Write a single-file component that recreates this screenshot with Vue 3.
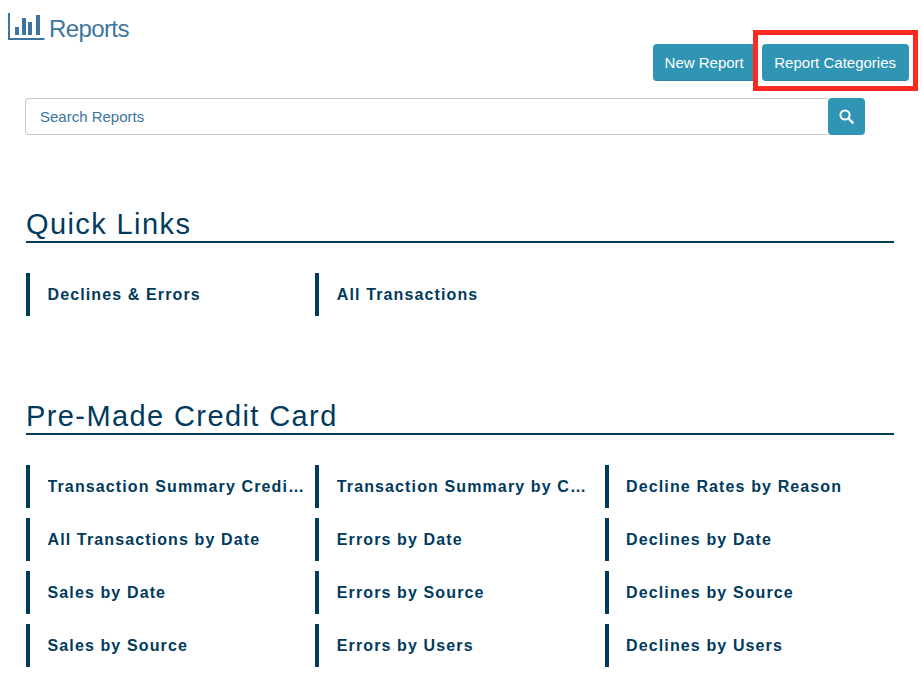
<script setup>
const quick = ['Declines & Errors', 'All Transactions']
const premade = [
  'Transaction Summary Credit Card', 'Transaction Summary by Card', 'Decline Rates by Reason',
  'All Transactions by Date', 'Errors by Date', 'Declines by Date',
  'Sales by Date', 'Errors by Source', 'Declines by Source',
  'Sales by Source', 'Errors by Users', 'Declines by Users'
]
</script>

<template>
  <div class="page">
    <header class="title">
      <svg class="logo" width="37" height="27" viewBox="0 0 37 27">
        <path d="M1 0V26H36.5" fill="none" stroke="#3b75a0" stroke-width="2"/>
        <rect x="7" y="14" width="4" height="8" fill="#3b75a0"/>
        <rect x="14" y="5" width="4" height="17" fill="#3b75a0"/>
        <rect x="20" y="9" width="4" height="13" fill="#3b75a0"/>
        <rect x="28" y="2" width="4" height="20" fill="#3b75a0"/>
      </svg>
      <span>Reports</span>
    </header>

    <div class="actions">
      <button class="btn btn-new">New Report</button>
      <span class="highlight"><button class="btn">Report Categories</button></span>
    </div>

    <div class="search">
      <div class="input">Search Reports</div>
      <button class="search-btn" aria-label="Search">
        <svg width="15" height="15" viewBox="0 0 15 15">
          <circle cx="6" cy="6" r="4.6" fill="none" stroke="#fff" stroke-width="2"/>
          <path d="M9.5 9.5L13.6 13.6" stroke="#fff" stroke-width="2.4" stroke-linecap="round"/>
        </svg>
      </button>
    </div>

    <section class="section first">
      <h2>Quick Links</h2>
      <div class="grid">
        <a v-for="q in quick" :key="q" class="link"><span>{{ q }}</span></a>
      </div>
    </section>

    <section class="section second">
      <h2>Pre-Made Credit Card</h2>
      <div class="grid">
        <a v-for="p in premade" :key="p" class="link"><span>{{ p }}</span></a>
      </div>
    </section>
  </div>
</template>

<style>
html, body { margin: 0; background: #fff; }
</style>

<style scoped>
.page {
  width: 922px;
  height: 674px;
  overflow: hidden;
  box-sizing: border-box;
  font-family: "Liberation Sans", Arial, sans-serif;
  position: relative;
}
.title {
  display: flex;
  align-items: flex-start;
  gap: 4px;
  padding: 13px 0 0 8px;
  height: 31px;
  color: #3b75a0;
  font-size: 24px;
  letter-spacing: -0.6px;
  line-height: 32px;
}
.logo { display: block; }
.actions {
  display: flex;
  justify-content: flex-end;
  padding-right: 13px;
  gap: 5px;
}
.btn {
  height: 37px;
  padding: 0 13px 0 12.5px;
  border: 0;
  border-bottom: 1px solid #2b86a6;
  border-radius: 4px;
  background: #3095b4;
  color: #fff;
  font: 15px "Liberation Sans", Arial, sans-serif;
  display: block;
}
.btn-new { padding-left: 12px; }
.highlight { position: relative; display: block; }
.highlight::after {
  content: "";
  position: absolute;
  left: -9px;
  right: -9px;
  top: -14px;
  bottom: -10px;
  border: 5px solid #ff2a1f;
  pointer-events: none;
}
.search {
  display: flex;
  margin: 17px 57px 0 25px;
  height: 37px;
}
.input {
  flex: 1;
  box-sizing: border-box;
  border: 1px solid #c9c9c9;
  border-right: 0;
  border-radius: 4px 0 0 4px;
  padding-left: 14px;
  line-height: 36px;
  color: #3b75a0;
  font-size: 15px;
}
.search-btn {
  width: 37px;
  height: 37px;
  border: 0;
  border-radius: 4px;
  background: #3095b4;
  display: flex;
  align-items: center;
  justify-content: center;
  padding: 0 1px 1px 0;
}
.section { margin: 0 28px 0 26px; }
.first { margin-top: 71px; }
.second { margin-top: 82px; }
h2 {
  margin: 0;
  height: 35px;
  border-bottom: 2px solid #003a5d;
  color: #003a5d;
  font-size: 29px;
  font-weight: 400;
  letter-spacing: 1.4px;
  line-height: 37px;
}
.grid {
  display: grid;
  grid-template-columns: repeat(3, 279.3px);
  column-gap: 10px;
  row-gap: 10px;
  margin-top: 30px;
}
.link {
  height: 43px;
  border-left: 4px solid #003a5d;
  padding-left: 17.5px;
  display: flex;
  align-items: center;
  min-width: 0;
  color: #003a5d;
  font-size: 16px;
  font-weight: 700;
  letter-spacing: 1.12px;
}
.link span {
  white-space: nowrap;
  overflow: hidden;
  text-overflow: ellipsis;
}
</style>
